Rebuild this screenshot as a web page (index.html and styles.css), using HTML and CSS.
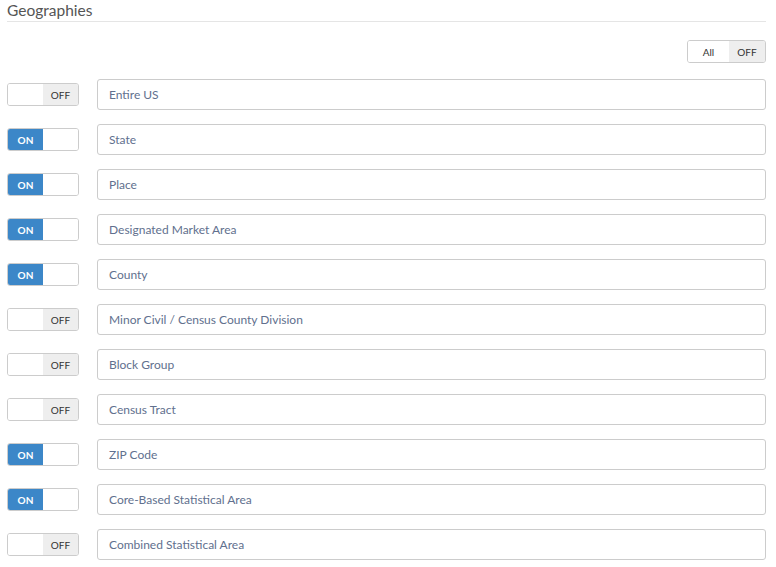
FILE: index.html
```html
<!DOCTYPE html>
<html>
<head>
<meta charset="utf-8">
<link rel="stylesheet" href="styles.css">
</head>
<body>
<div class="panel">
  <h2 class="title">Geographies</h2>
  <div class="all-row">
    <div class="all-switch"><span class="all-lbl">All</span><span class="all-off">OFF</span></div>
  </div>
  <div class="rows">
    <div class="row"><div class="toggle off"><span class="blank"></span><span class="lbl">OFF</span></div><div class="field">Entire US</div></div>
    <div class="row"><div class="toggle on"><span class="lbl">ON</span><span class="blank"></span></div><div class="field">State</div></div>
    <div class="row"><div class="toggle on"><span class="lbl">ON</span><span class="blank"></span></div><div class="field">Place</div></div>
    <div class="row"><div class="toggle on"><span class="lbl">ON</span><span class="blank"></span></div><div class="field">Designated Market Area</div></div>
    <div class="row"><div class="toggle on"><span class="lbl">ON</span><span class="blank"></span></div><div class="field">County</div></div>
    <div class="row"><div class="toggle off"><span class="blank"></span><span class="lbl">OFF</span></div><div class="field">Minor Civil / Census County Division</div></div>
    <div class="row"><div class="toggle off"><span class="blank"></span><span class="lbl">OFF</span></div><div class="field">Block Group</div></div>
    <div class="row"><div class="toggle off"><span class="blank"></span><span class="lbl">OFF</span></div><div class="field">Census Tract</div></div>
    <div class="row"><div class="toggle on"><span class="lbl">ON</span><span class="blank"></span></div><div class="field">ZIP Code</div></div>
    <div class="row"><div class="toggle on"><span class="lbl">ON</span><span class="blank"></span></div><div class="field">Core-Based Statistical Area</div></div>
    <div class="row"><div class="toggle off"><span class="blank"></span><span class="lbl">OFF</span></div><div class="field">Combined Statistical Area</div></div>
  </div>
</div>
</body>
</html>
```
FILE: styles.css
```css
html, body { margin: 0; padding: 0; background: #fff; }
body { font-family: "Lato", "Open Sans", sans-serif; }
.panel { padding: 0 10px 0 7px; }
.title {
  margin: 0;
  font-size: 15.5px;
  font-weight: 400;
  color: #555;
  line-height: 20px;
  height: 21px;
  border-bottom: 1px solid #e5e5e5;
}
.all-row { display: flex; justify-content: flex-end; margin-top: 18px; }
.all-switch {
  display: flex;
  height: 21px;
  border: 1px solid #ccc;
  border-radius: 3px;
  overflow: hidden;
  font-size: 10px;
  color: #333;
}
.all-lbl { width: 41px; display: flex; align-items: center; justify-content: center; background: #fff; }
.all-off { width: 36px; display: flex; align-items: center; justify-content: center; background: #eee; }
.rows { display: flex; flex-direction: column; gap: 14px; margin-top: 16px; }
.row { display: flex; align-items: center; gap: 18px; }
.toggle {
  width: 70px;
  height: 21px;
  border: 1px solid #ccc;
  border-radius: 3px;
  display: flex;
  overflow: hidden;
  flex: none;
  font-size: 10px;
  font-weight: 700;
}
.toggle .lbl, .toggle .blank { width: 35px; display: flex; align-items: center; justify-content: center; }
.toggle.on .lbl { background: #3c87c8; color: #fff; }
.toggle.off .lbl { background: #eee; color: #333; font-weight: 400; }
.toggle .blank { background: #fff; }
.field {
  flex: 1;
  height: 29px;
  border: 1px solid #ccc;
  border-radius: 3px;
  display: flex;
  align-items: center;
  padding-left: 11px;
  font-size: 12px;
  color: #61708e;
}
```
